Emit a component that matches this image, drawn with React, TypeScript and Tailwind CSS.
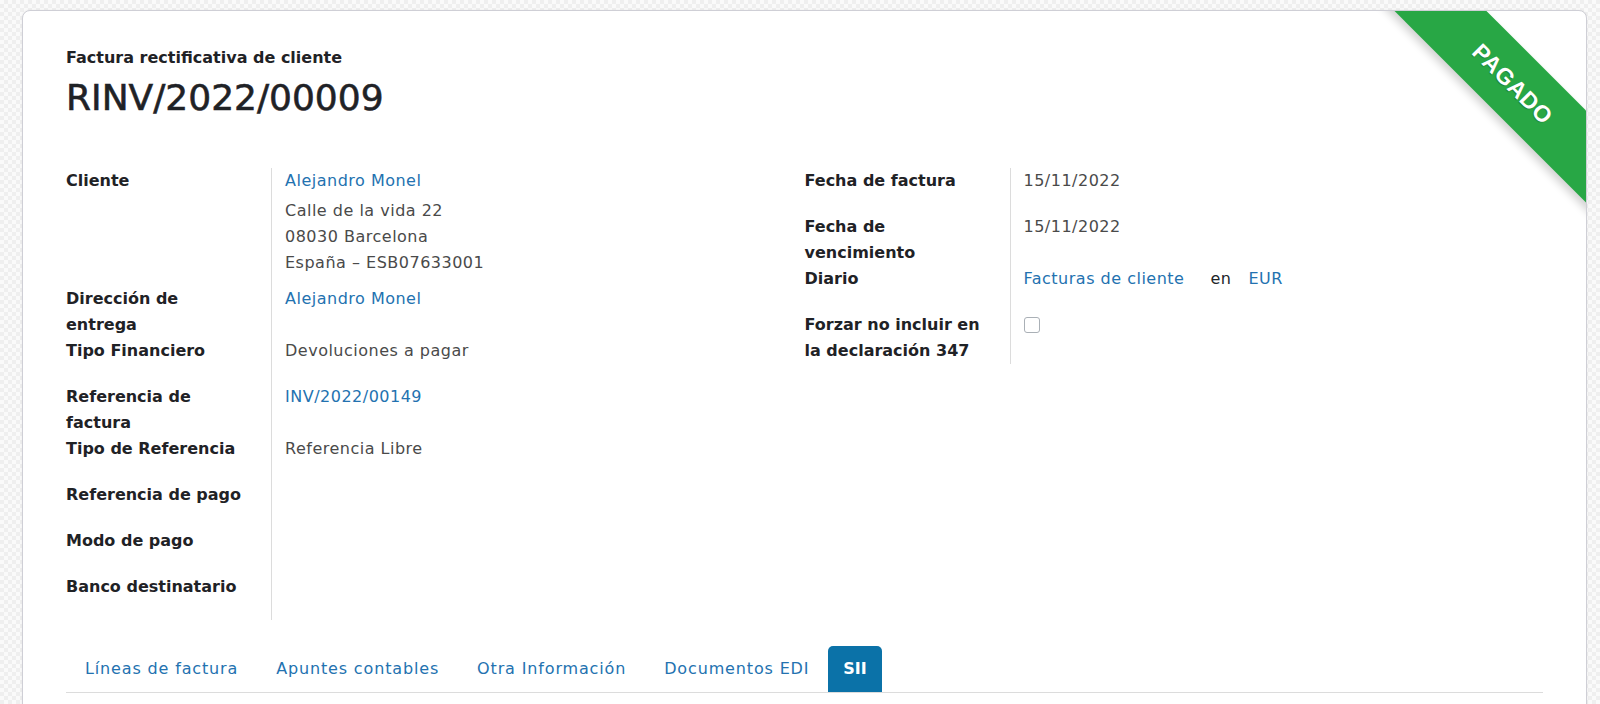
import React from 'react';

type Row = {
  label: React.ReactNode;
  value?: React.ReactNode;
  valueClass?: string;
};

const LINK = 'text-[#2372b0]';

const Address = () => (
  <div className="mt-1 text-[#4a4a4a]">
    <div>Calle de la vida 22</div>
    <div>08030 Barcelona</div>
    <div>España – ESB07633001</div>
  </div>
);

const leftRows: Row[] = [
  {
    label: 'Cliente',
    value: (
      <>
        <div className={LINK}>Alejandro Monel</div>
        <Address />
      </>
    ),
    valueClass: 'pb-[10px]',
  },
  {
    label: (
      <>
        Dirección de
        <br />
        entrega
      </>
    ),
    value: <span className={LINK}>Alejandro Monel</span>,
  },
  { label: 'Tipo Financiero', value: 'Devoluciones a pagar' },
  {
    label: (
      <>
        Referencia de
        <br />
        factura
      </>
    ),
    value: <span className={LINK}>INV/2022/00149</span>,
  },
  { label: 'Tipo de Referencia', value: 'Referencia Libre' },
  { label: 'Referencia de pago' },
  { label: 'Modo de pago' },
  { label: 'Banco destinatario' },
];

const rightRows: Row[] = [
  { label: 'Fecha de factura', value: '15/11/2022' },
  {
    label: (
      <>
        Fecha de
        <br />
        vencimiento
      </>
    ),
    value: '15/11/2022',
  },
  {
    label: 'Diario',
    value: (
      <div className="flex">
        <span className={LINK}>Facturas de cliente</span>
        <span className="ml-[26px] text-[#212529]">en</span>
        <span className={`ml-[17px] ${LINK}`}>EUR</span>
      </div>
    ),
  },
  {
    label: (
      <>
        Forzar no incluir en
        <br />
        la declaración 347
      </>
    ),
    value: <div className="mt-[5px] h-4 w-4 rounded-[3px] border border-[#aab0b6] bg-white" />,
  },
];

const FieldGroup: React.FC<{ rows: Row[] }> = ({ rows }) => (
  <div className="grid grid-cols-[206px_1fr] content-start">
    {rows.map((row, i) => (
      <React.Fragment key={i}>
        <div className="border-r border-[#dcdcdc] pr-2 font-bold tracking-normal text-[#1f2226]">{row.label}</div>
        <div className={`min-h-[46px] pl-[13px] text-[#4a4a4a] ${row.valueClass ?? 'pb-5'}`}>{row.value}</div>
      </React.Fragment>
    ))}
  </div>
);

const tabs = ['Líneas de factura', 'Apuntes contables', 'Otra Información', 'Documentos EDI'];

export default function App() {
  return (
    <div className="h-[704px] overflow-hidden bg-[conic-gradient(#efefef_25%,#fafafa_0_50%,#efefef_0_75%,#fafafa_0)] bg-[length:8px_8px] pt-[10px] pl-[22px] pr-[13px] font-['DejaVu_Sans',sans-serif] text-[16px] leading-[26px] tracking-[0.5px]">
      <div className="relative min-h-[760px] overflow-hidden rounded-lg border border-[#cfcfd6] bg-white px-[43px] pt-[35px] shadow-[0_0_3px_rgba(0,0,0,0.06)]">
        {/* ribbon */}
        <div className="absolute right-[-77px] top-[40px] flex h-[65px] w-[300px] rotate-45 items-center justify-center bg-[#28a745] shadow-[0_5px_8px_rgba(0,0,0,0.18)]">
          <span className="font-['Liberation_Sans',sans-serif] text-[23px] font-bold tracking-[0.5px] text-white [text-shadow:0_1px_1px_rgba(0,0,0,0.25)]">
            PAGADO
          </span>
        </div>

        <div className="text-[16px] font-bold leading-6 tracking-normal text-[#1f2226]">Factura rectificativa de cliente</div>
        <div className="mt-[6px] text-[36px] leading-[44px] tracking-normal text-[#1f2226] [-webkit-text-stroke:0.6px_#1f2226]">
          RINV/2022/00009
        </div>

        <div className="mt-[48px] grid grid-cols-2">
          <FieldGroup rows={leftRows} />
          <FieldGroup rows={rightRows} />
        </div>

        <div className="mt-[26px] flex border-b border-[#dcdcdc]">
          {tabs.map((t) => (
            <div key={t} className={`flex h-[46px] items-center px-[19px] tracking-[0.85px] ${LINK}`}>
              {t}
            </div>
          ))}
          <div className="flex h-[46px] items-center rounded-t-[5px] bg-[#0b72a8] px-[15px] font-bold tracking-normal text-white">
            SII
          </div>
        </div>
      </div>
    </div>
  );
}
